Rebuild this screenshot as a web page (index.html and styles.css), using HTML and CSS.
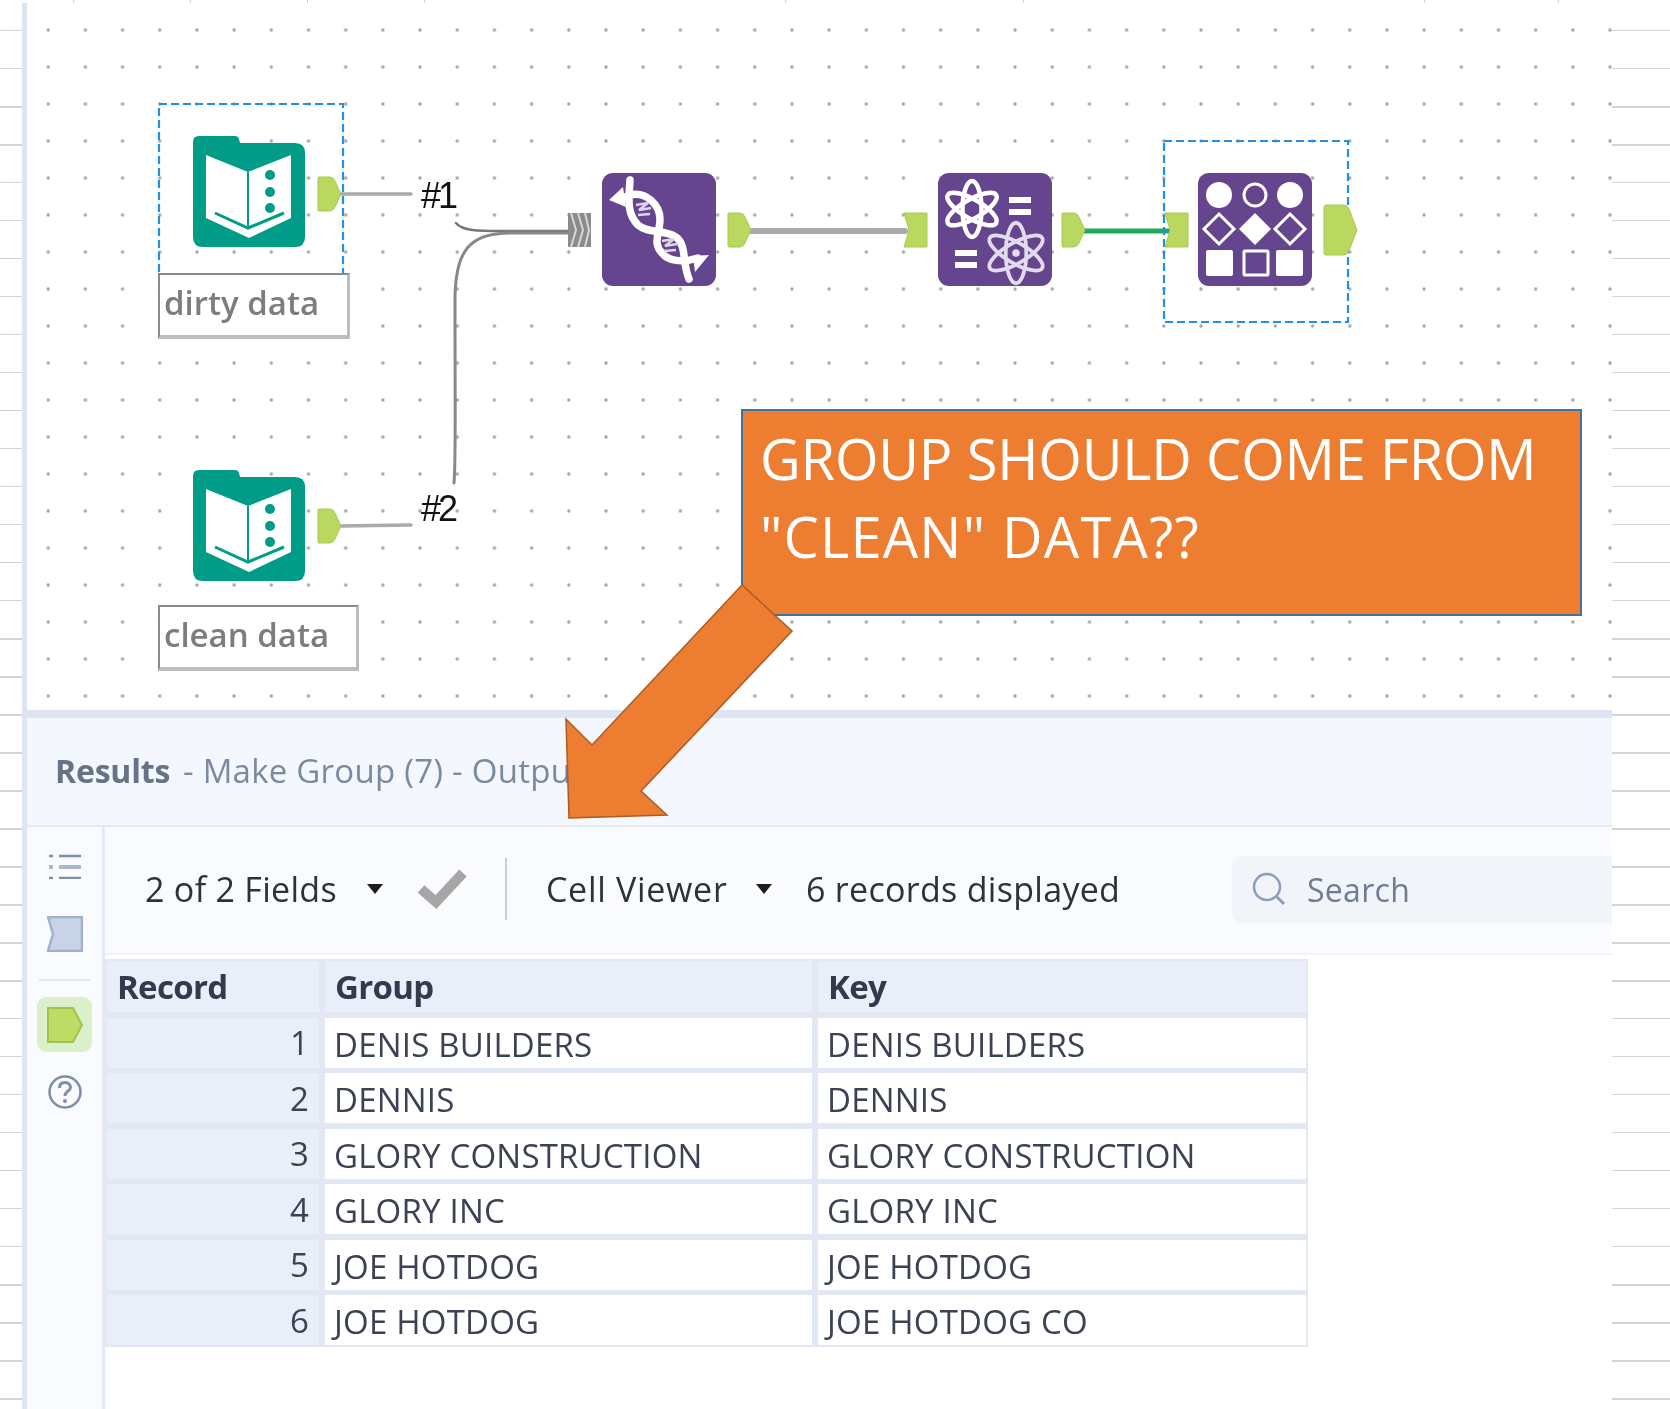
FILE: index.html
```html
<!DOCTYPE html>
<html lang="en">
<head>
<meta charset="utf-8">
<title>Workflow results</title>
<link rel="stylesheet" href="styles.css">
</head>
<body>
<div class="sheet">
  <div class="gutter gutter-left"></div>
  <div class="app">
    <section class="canvas">
      <svg class="diagram" width="1585" height="707" viewBox="27 3 1585 707" xmlns="http://www.w3.org/2000/svg">
        <defs>
          <g id="book">
            <path fill="#009c88" d="M6 0H42Q45 0 46 3L47 7H102Q112 7 112 17V101Q112 111 102 111H10Q0 111 0 101V6Q0 0 6 0Z"/>
            <path fill="#fff" d="M13 19L55 36L98 19V82L56 102L13 82Z"/>
            <path fill="none" stroke="#009c88" stroke-width="2" d="M55 36V90"/>
            <path fill="none" stroke="#009c88" stroke-width="3" d="M22 77L55 92L91 77"/>
            <circle cx="77" cy="39" r="5" fill="#009c88"/><circle cx="77" cy="56" r="5" fill="#009c88"/><circle cx="77" cy="72" r="5" fill="#009c88"/>
          </g>
          <path id="out" fill="#bad85f" stroke="#a9c950" d="M0 1Q0 0 1 0H12Q15 0 17 4L23 17L17 30Q15 34 12 34H1Q0 34 0 33Z"/>
          <path id="in" fill="#bad85f" stroke="#a9c950" d="M0 0H23V34H0L5 17Z"/>
          <g id="atom" fill="none">
            <ellipse cx="0" cy="0" rx="9.500" ry="28"/>
            <ellipse cx="0" cy="0" rx="9.500" ry="28" transform="rotate(60)"/>
            <ellipse cx="0" cy="0" rx="9.500" ry="28" transform="rotate(120)"/>
          </g>
        </defs>

        <g fill="none" stroke-linecap="round">
          <path stroke="#aaa" stroke-width="3.500" d="M340 194H411"/>
          <path stroke="#aaa" stroke-width="3.500" d="M340 526L411 525"/>
          <path stroke="#777" stroke-width="2.500" d="M456 223C462 231 480 231 500 231H570"/>
          <path stroke="#888" stroke-width="3" d="M454 483C456 460 455 420 455 300C455 250 470 233 510 233H570"/>
          <path stroke="#aaa" stroke-width="6" d="M750 231H905"/>
          <path stroke="#22a85a" stroke-width="5" d="M1083 231H1172"/>
        </g>

        <rect class="select" x="159" y="104" width="184" height="170"/>
        <rect class="select" x="1164" y="141" width="184" height="181"/>

        <use href="#book" x="193" y="136"/>
        <use href="#book" x="193" y="470"/>
        <use href="#out" x="318" y="177"/>
        <use href="#out" x="318" y="509"/>

        <g transform="translate(568 213)">
          <rect width="23" height="34" fill="#8b8b8b"/>
          <path fill="none" stroke="#d8d8d8" stroke-width="2" d="M3 0L8 17L3 34M10 0L15 17L10 34M17 0L21 17L17 34"/>
        </g>

        <g transform="translate(602 173)">
          <rect width="114" height="113" rx="11" fill="#65468e"/>
          <path fill="#fff" d="M7 27L21 14L24 34Z"/>
          <path fill="#fff" d="M107 82L91 83L93 99Z"/>
          <g fill="none" stroke="#fff" stroke-width="7.500" stroke-linecap="round">
            <path d="M28 7C27 25 24 40 36 52C46 61 62 56 74 64C85 72 80 90 87 106"/>
            <path d="M18 26L28 22C44 18 58 32 58 46C58 60 50 70 60 80C66 88 80 90 96 85"/>
          </g>
          <path fill="none" stroke="#ddd5ea" stroke-width="2.500" d="M34 32L46 30L37 37L49 35M36 42L48 41M60 68L72 66L63 73L75 71M62 78L74 77"/>
        </g>

        <use href="#out" x="728" y="213"/>
        <use href="#in" x="904" y="213"/>

        <g transform="translate(938 173)">
          <rect width="114" height="113" rx="11" fill="#65468e"/>
          <use href="#atom" x="34" y="36" stroke="#fff" stroke-width="4.500"/>
          <circle cx="34" cy="36" r="7" fill="#65468e"/>
          <path fill="#fff" d="M71 24H93V30H71ZM71 36H93V42H71ZM17 77H39V83H17ZM17 89H39V95H17Z"/>
          <g transform="translate(78 80) scale(1.08)">
            <use href="#atom" stroke="#e2dbee" stroke-width="3.500"/>
            <circle r="3.500" fill="#e2dbee"/>
          </g>
        </g>

        <use href="#out" x="1062" y="213"/>
        <use href="#in" x="1165" y="213"/>

        <g transform="translate(1198 173)">
          <rect width="114" height="113" rx="11" fill="#65468e"/>
          <circle cx="21" cy="22" r="13" fill="#fff"/>
          <circle cx="57" cy="22" r="11" fill="none" stroke="#fff" stroke-width="3"/>
          <circle cx="92" cy="22" r="13" fill="#fff"/>
          <path fill="none" stroke="#fff" stroke-width="3" d="M21 41L36 56L21 71L6 56ZM92 41L107 56L92 71L77 56Z"/>
          <path fill="#fff" d="M57 40L73 56L57 72L41 56Z"/>
          <rect x="8" y="77" width="27" height="26" rx="2" fill="#fff"/>
          <rect x="46" y="78" width="24" height="24" rx="1" fill="none" stroke="#fff" stroke-width="3"/>
          <rect x="78" y="77" width="27" height="26" rx="2" fill="#fff"/>
        </g>

        <path fill="#bad85f" stroke="#a9c950" d="M1324 207Q1324 205 1326 205H1344Q1347 205 1349 209L1357 230L1349 251Q1347 255 1344 255H1326Q1324 255 1324 253Z"/>
      </svg>

      <div class="caption caption-dirty">dirty data</div>
      <div class="caption caption-clean">clean data</div>
      <span class="wire-tag tag-one">#1</span>
      <span class="wire-tag tag-two">#2</span>
    </section>

    <section class="results">
      <header class="results-head">
        <strong>Results</strong><span class="results-sub">&nbsp;- Make Group (7) - Output</span>
      </header>
      <div class="results-body">
        <nav class="rail">
          <svg class="rail-list" width="32" height="26" viewBox="0 0 32 26" xmlns="http://www.w3.org/2000/svg">
            <path stroke="#7f8da6" stroke-width="2.500" fill="none" d="M0 3H4M10 3H32M0 25H4M10 25H32"/>
            <path stroke="#aeb8c9" stroke-width="4" fill="none" d="M0 14H4M10 14H32"/>
          </svg>
          <svg class="rail-input" width="36" height="36" viewBox="0 0 36 36" xmlns="http://www.w3.org/2000/svg">
            <path fill="#c8d3e8" stroke="#a0b0d0" stroke-width="2.500" d="M1 1H35V35H1L6 18Z"/>
          </svg>
          <div class="rail-rule"></div>
          <div class="rail-active">
            <svg width="36" height="36" viewBox="0 0 36 36" xmlns="http://www.w3.org/2000/svg">
              <path fill="#bedc64" stroke="#a3c052" stroke-width="2" d="M1 1H26L35 18L26 35H1Z"/>
            </svg>
          </div>
          <svg class="rail-help" width="36" height="36" viewBox="0 0 36 36" xmlns="http://www.w3.org/2000/svg">
            <circle cx="18" cy="18" r="15.500" fill="none" stroke="#7f8da6" stroke-width="2.500"/>
            <path fill="none" stroke="#7f8da6" stroke-width="3" d="M12.500 14C12.500 10 15 8.500 18 8.500C21 8.500 23.500 10.500 23.500 13.500C23.500 17 18 17 18 22"/>
            <circle cx="18" cy="27" r="2" fill="#7f8da6"/>
          </svg>
        </nav>
        <div class="content">
          <div class="toolbar">
            <span class="tool-text fields">2 of 2 Fields</span>
            <span class="caret caret-fields"></span>
            <svg class="check" width="50" height="40" viewBox="0 0 50 40" xmlns="http://www.w3.org/2000/svg">
              <path fill="none" stroke="#a6a6a6" stroke-width="10" d="M4 20L19 33L46 4"/>
            </svg>
            <span class="tool-sep"></span>
            <span class="tool-text viewer">Cell Viewer</span>
            <span class="caret caret-viewer"></span>
            <span class="tool-text records">6 records displayed</span>
            <div class="search">
              <svg width="34" height="34" viewBox="0 0 34 34" xmlns="http://www.w3.org/2000/svg">
                <circle cx="15" cy="15" r="13" fill="none" stroke="#8d9db9" stroke-width="2.500"/>
                <path stroke="#8d9db9" stroke-width="3" d="M25 25L32 32"/>
              </svg>
              <span class="search-text">Search</span>
            </div>
          </div>
          <div class="grid">
            <div class="th">Record</div><div class="th">Group</div><div class="th">Key</div>
            <div class="num">1</div><div class="td">DENIS BUILDERS</div><div class="td">DENIS BUILDERS</div>
            <div class="num">2</div><div class="td">DENNIS</div><div class="td">DENNIS</div>
            <div class="num">3</div><div class="td">GLORY CONSTRUCTION</div><div class="td">GLORY CONSTRUCTION</div>
            <div class="num">4</div><div class="td">GLORY INC</div><div class="td">GLORY INC</div>
            <div class="num">5</div><div class="td">JOE HOTDOG</div><div class="td">JOE HOTDOG</div>
            <div class="num">6</div><div class="td">JOE HOTDOG</div><div class="td">JOE HOTDOG CO</div>
          </div>
        </div>
      </div>
    </section>
  </div>
  <div class="gutter gutter-right"></div>

  <div class="ticks">
    <i class="t1"></i><i class="t2"></i><i class="t3"></i><i class="t4"></i><i class="t5"></i><i class="t6"></i><i class="t7"></i><i class="t8"></i>
  </div>

  <div class="callout"><span class="callout-first">GROUP SHOULD COME FROM</span><br><span class="callout-second">"CLEAN" DATA??</span></div>
  <svg class="arrow" width="240" height="245" viewBox="560 580 240 245" xmlns="http://www.w3.org/2000/svg">
    <path fill="#ed7d31" stroke="#ae5a21" stroke-width="1.500" d="M742 585L792 631L641 791L667 815L569 818L566 719L592 745Z"/>
  </svg>
</div>
</body>
</html>
```

FILE: styles.css
```css
* { box-sizing: border-box; }

html, body { margin: 0; padding: 0; background: #fff; }

body { font-family: "Open Sans", "Liberation Sans", sans-serif; }

.sheet {
  position: relative;
  display: flex;
  width: 1670px;
  height: 1409px;
  overflow: hidden;
  background: #fff;
}

.gutter {
  background: repeating-linear-gradient(to bottom, #fff 0, #fff 30px, #d4d4d4 30px, #d4d4d4 31.5px, #fff 31.5px, #fff 38px);
}

.gutter-left { flex: 0 0 22px; }
.gutter-right { flex: 1 1 0; }

.app {
  flex: 0 0 1590px;
  margin-top: 3px;
  display: flex;
  flex-direction: column;
  border-left: 5px solid #dde5f3;
  background: #fff;
}

/* canvas */
.canvas {
  position: relative;
  flex: 0 0 707px;
  background-image: radial-gradient(circle at center, #9a9a9a 0, #a8a8a8 1.1px, rgba(255,255,255,0) 2.2px);
  background-size: 37.2px 37px;
  background-position: 2.6px 8.5px;
}

.diagram {
  position: absolute;
  left: 0;
  top: 0;
  filter: blur(0.7px);
}

.select {
  fill: none;
  stroke: #1f8fe8;
  stroke-width: 2.2;
  stroke-dasharray: 8 4;
}

.caption {
  position: absolute;
  background: #fff;
  border-top: 2px solid #8a8a8a;
  border-left: 2px solid #8a8a8a;
  border-right: 3px solid #bdbdbd;
  border-bottom: 4px solid #bdbdbd;
  padding-left: 4px;
  font-size: 33px;
  font-weight: 600;
  line-height: 55px;
  color: #7d7d80;
  filter: blur(0.5px);
}

.caption-dirty { left: 131px; top: 270px; width: 192px; height: 66px; }
.caption-clean { left: 131px; top: 602px; width: 201px; height: 66px; }

.wire-tag {
  position: absolute;
  font-family: "Liberation Sans", Arial, sans-serif;
  font-size: 36px;
  line-height: 36px;
  color: #111;
  letter-spacing: -3px;
  filter: blur(0.4px);
}

.tag-one { left: 394px; top: 175px; }
.tag-two { left: 394px; top: 488px; }

/* results */
.results {
  flex: 1;
  display: flex;
  flex-direction: column;
  min-height: 0;
  border-top: 8px solid #dde5f3;
}

.results-head {
  flex: 0 0 109px;
  display: flex;
  align-items: center;
  padding: 0 0 2px 28px;
  background: #f4f7fd;
  border-bottom: 2px solid #e3e9f5;
  font-size: 33px;
  color: #7a8a9f;
  filter: blur(0.4px);
}

.results-head strong { font-size: 32px; font-weight: 700; color: #667387; letter-spacing: -0.2px; }
.results-sub { margin-left: 4px; letter-spacing: 0.25px; }

.results-body { flex: 1; display: flex; min-height: 0; }

.rail {
  flex: 0 0 78px;
  display: flex;
  flex-direction: column;
  align-items: center;
  padding-top: 26px;
  background: #f9fbfe;
  border-right: 3px solid #e3e9f5;
}

.rail > * { flex: none; filter: blur(0.4px); }

.rail-input { margin-top: 37px; }

.rail-rule { width: 52px; height: 2px; margin-top: 27px; background: #e3e9f5; }

.rail-active {
  display: flex;
  align-items: center;
  justify-content: center;
  width: 55px;
  height: 55px;
  margin-top: 16px;
  background: #dcefcb;
  border-radius: 9px;
}

.rail-help { margin-top: 22px; }

.content { flex: 1; min-width: 0; display: flex; flex-direction: column; }

.toolbar {
  flex: 0 0 128px;
  display: flex;
  align-items: center;
  padding: 0 0 2px 40px;
  background: #fafbfe;
  border-bottom: 2px solid #f1f3f8;
}

.tool-text {
  font-size: 34px;
  line-height: 46px;
  color: #2d3138;
  letter-spacing: 0.3px;
  filter: blur(0.4px);
  white-space: nowrap;
}

.caret {
  width: 0;
  height: 0;
  border-left: 8.500px solid transparent;
  border-right: 8.500px solid transparent;
  border-top: 10px solid #1c1c1c;
}

.fields { width: 222px; }
.check { margin-left: 34px; flex: none; }
.tool-sep { width: 2px; height: 62px; margin-left: 38px; background: #c7ced8; }
.viewer { margin-left: 39px; width: 210px; letter-spacing: 0.7px; }
.records { margin-left: 34px; }

.search {
  margin-left: auto;
  width: 380px;
  height: 67px;
  display: flex;
  align-items: center;
  gap: 21px;
  padding-left: 20px;
  background: #f1f4f9;
  border-radius: 10px 0 0 10px;
  filter: blur(0.3px);
}

.search-text { font-size: 32px; color: #6f7c93; letter-spacing: 0.3px; }

.grid {
  width: 1203px;
  margin-top: 4px;
  padding: 2px;
  display: grid;
  grid-template-columns: 212px 487px 488px;
  grid-template-rows: 51px repeat(6, 50px);
  column-gap: 6px;
  row-gap: 5.5px;
  background: #e1e7f3;
  font-size: 33px;
  color: #3b4254;
  letter-spacing: 0.2px;
}

.grid > div {
  display: flex;
  align-items: center;
  filter: blur(0.4px);
  white-space: nowrap;
}

.th { background: #e9eef9; padding-left: 10px; font-weight: 700; color: #333a4b; letter-spacing: -0.7px; }
.num { background: #e9eef9; justify-content: flex-end; padding-right: 10px; }
.td { background: #fff; padding: 3px 0 0 9px; }

/* overlays */
.callout {
  position: absolute;
  left: 741px;
  top: 409px;
  width: 841px;
  height: 207px;
  padding: 8px 0 0 17px;
  background: #ed7d31;
  border: 2px solid #41719c;
  font-size: 56px;
  line-height: 78px;
  color: #fff;
  white-space: nowrap;
}

.callout-first { letter-spacing: -0.2px; }
.callout-second { letter-spacing: 1.2px; }

.arrow { position: absolute; left: 560px; top: 580px; }

.ticks { position: absolute; left: 0; top: 0; width: 100%; height: 3px; }
.ticks i { position: absolute; top: 0; width: 1px; height: 3px; background: #cfcfcf; }
.t1 { left: 73px; } .t2 { left: 190px; } .t3 { left: 307px; } .t4 { left: 424px; }
.t5 { left: 785px; } .t6 { left: 1023px; } .t7 { left: 1424px; } .t8 { left: 1558px; }
```
